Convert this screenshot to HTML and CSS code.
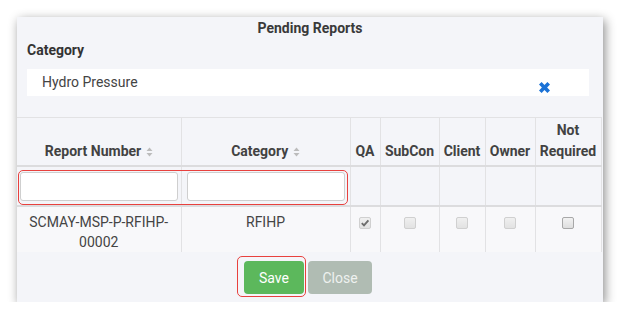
FILE: index.html
```html
<!DOCTYPE html>
<html>
<head>
<meta charset="utf-8">
<link rel="stylesheet" href="styles.css">
</head>
<body>
<div class="modal">
  <div class="title">Pending Reports</div>
  <div class="label">Category</div>
  <div class="select">
    <span class="select-text">Hydro Pressure</span>
    <svg class="clear" width="13" height="13" viewBox="0 0 13 13"><path d="M1 3.6 L3.6 1 L6.5 3.9 L9.4 1 L12 3.6 L9.1 6.5 L12 9.4 L9.4 12 L6.5 9.1 L3.6 12 L1 9.4 L3.9 6.5 Z" fill="#1b72d6"/></svg>
  </div>
  <div class="table-wrap">
    <table class="grid">
      <colgroup>
        <col class="c-num"><col class="c-cat"><col class="c-qa"><col class="c-sub"><col class="c-cli"><col class="c-own"><col class="c-not">
      </colgroup>
      <thead>
        <tr class="head">
          <th>Report Number <svg class="sort" width="7" height="10" viewBox="0 0 7 10"><path d="M3.5 0.5 L6.5 4 L0.5 4 Z M3.5 9.5 L6.5 6 L0.5 6 Z" fill="#bcbcbc"/></svg></th>
          <th>Category <svg class="sort" width="7" height="10" viewBox="0 0 7 10"><path d="M3.5 0.5 L6.5 4 L0.5 4 Z M3.5 9.5 L6.5 6 L0.5 6 Z" fill="#bcbcbc"/></svg></th>
          <th>QA</th>
          <th>SubCon</th>
          <th>Client</th>
          <th>Owner</th>
          <th>Not Required</th>
        </tr>
        <tr class="filter">
          <th><input class="filter-input" type="text"></th>
          <th><input class="filter-input" type="text"></th>
          <th></th><th></th><th></th><th></th><th></th>
        </tr>
      </thead>
      <tbody>
        <tr class="data">
          <td>SCMAY-MSP-P-RFIHP-00002</td>
          <td>RFIHP</td>
          <td><span class="cb checked"><svg width="10" height="10" viewBox="0 0 10 10"><path d="M1.8 5.2 L4 7.4 L8.4 2.4" stroke="#6d6d6d" stroke-width="1.9" fill="none"/></svg></span></td>
          <td><span class="cb"></span></td>
          <td><span class="cb"></span></td>
          <td><span class="cb"></span></td>
          <td><span class="cb enabled"></span></td>
        </tr>
      </tbody>
    </table>
  </div>
  <div class="footer">
    <span class="save-wrap"><button class="btn save">Save</button><span class="mark mark-save"></span></span>
    <button class="btn close">Close</button>
  </div>
  <span class="mark mark-filter"></span>
</div>
</body>
</html>
```

FILE: styles.css
```css
html, body {
  margin: 0;
  padding: 0;
  background: #ffffff;
  font-family: Roboto, "Liberation Sans", sans-serif;
}

.modal {
  position: relative;
  margin: 17px 0 0 17px;
  width: 586px;
  height: 285px;
  background: #f4f5f9;
  box-shadow: 2px 3px 10px rgba(0, 0, 0, 0.45);
  padding-top: 2px;
  box-sizing: border-box;
  color: #3d3d3d;
}

.title {
  text-align: center;
  font-weight: 700;
  font-size: 14px;
  line-height: 18px;
  height: 18px;
  color: #3a3a3a;
}

.label {
  margin-top: 4px;
  padding-left: 10px;
  font-weight: 700;
  font-size: 14px;
  line-height: 18px;
  color: #333;
}

.select {
  margin: 10px 14px 0 10px;
  height: 27px;
  background: #ffffff;
  display: flex;
  align-items: center;
  padding-left: 15px;
  box-sizing: border-box;
}

.select-text {
  flex: 1;
  font-size: 14px;
  color: #444;
  margin-top: -1px;
}

.clear {
  align-self: flex-end;
  margin: 0 38px 2px 0;
}

.table-wrap {
  margin-top: 21px;
  height: 135px;
  overflow: hidden;
}

.grid {
  border-collapse: collapse;
  table-layout: fixed;
  width: 584px;
  font-size: 14px;
}

.c-num { width: 164px; }
.c-cat { width: 169px; }
.c-qa { width: 30px; }
.c-sub { width: 59px; }
.c-cli { width: 46px; }
.c-own { width: 50px; }
.c-not { width: 66px; }

.grid th, .grid td {
  border: 1px solid #e2e2e4;
  text-align: center;
  padding: 0 2px;
}

.grid th:first-child, .grid td:first-child { border-left: none; }
.grid th:last-child, .grid td:last-child { border-right: 1px solid #e2e2e4; }

.head th {
  height: 44px;
  vertical-align: bottom;
  padding-bottom: 3px;
  font-weight: 700;
  line-height: 21px;
  color: #424242;
  border-bottom: 2px solid #dcdcde;
}

.sort {
  vertical-align: -1px;
  margin-left: 1px;
}

.filter th {
  height: 38px;
  padding: 0;
  border-bottom: 2px solid #dcdcde;
}

.filter-input {
  display: block;
  margin: 0 auto;
  width: 158px;
  height: 29px;
  box-sizing: border-box;
  border: 1px solid #cfcfcf;
  border-radius: 3px;
  background: #fff;
  padding: 0;
}

.data td {
  height: 45px;
  vertical-align: top;
  padding-top: 5px;
  line-height: 20px;
  color: #444;
  background: #f8f8fa;
  border-bottom: none;
}

.cb {
  display: inline-block;
  width: 12px;
  height: 12px;
  margin-top: 5px;
  box-sizing: border-box;
  border: 1px solid #d0d0d0;
  border-radius: 2px;
  background: linear-gradient(#f0f0f0, #e2e2e2);
  vertical-align: top;
  position: relative;
}

.cb svg {
  position: absolute;
  left: 0;
  top: 0;
}

.cb.enabled {
  border-color: #a8a8a8;
  background: linear-gradient(#f2f2f2, #dedede);
}

.footer {
  display: flex;
  justify-content: center;
  gap: 4px;
  margin-top: 9px;
  padding-right: 4px;
}

.save-wrap {
  position: relative;
  display: inline-flex;
}

.btn {
  height: 33px;
  border: none;
  border-radius: 4px;
  font-family: Roboto, "Liberation Sans", sans-serif;
  font-size: 14px;
  color: #fff;
  padding: 0;
}

.save {
  width: 60px;
  background: #5cb85c;
}

.close {
  width: 64px;
  background: #b0bcb3;
  color: #eef1ef;
}

.mark {
  position: absolute;
  border: 1.5px solid #e8413e;
  border-radius: 5px;
  box-sizing: border-box;
  pointer-events: none;
}

.mark-save {
  left: -7px;
  top: -5px;
  width: 69px;
  height: 41px;
}

.mark-filter {
  left: 1px;
  top: 153px;
  width: 330px;
  height: 35px;
}
```
